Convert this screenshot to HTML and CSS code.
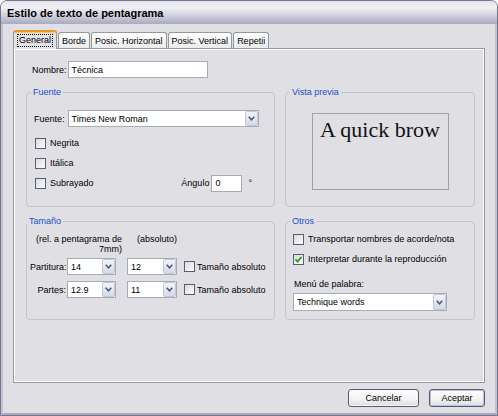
FILE: index.html
```html
<!DOCTYPE html>
<html lang="es">
<head>
<meta charset="utf-8">
<title>Estilo de texto de pentagrama</title>
<link rel="stylesheet" href="styles.css">
</head>
<body>
<div class="window">
  <div class="titlebar"><span class="title">Estilo de texto de pentagrama</span></div>
  <div class="client">
    <div class="tabs">
      <div class="tab active"><span class="focus">General</span></div>
      <div class="tab">Borde</div>
      <div class="tab">Posic. Horizontal</div>
      <div class="tab">Posic. Vertical</div>
      <div class="tab">Repetii</div>
    </div>
    <div class="panel">
      <div class="name-row">
        <span class="lbl">Nombre:</span>
        <div class="input name-input">Técnica</div>
      </div>
      <div class="groups">
        <fieldset class="group g-font">
          <legend>Fuente</legend>
          <div class="font-row">
            <span class="lbl font-lbl">Fuente:</span>
            <div class="select font-select"><span class="val">Times New Roman</span><span class="arrow"><svg width="7" height="5" viewBox="0 0 7 5"><polyline points="0.7,0.8 3.5,3.8 6.3,0.8" fill="none" stroke="#4a5a7e" stroke-width="1.6"/></svg></span></div>
          </div>
          <div class="checks">
            <div class="check-row"><span class="box"></span><span>Negrita</span></div>
            <div class="check-row"><span class="box"></span><span>Itálica</span></div>
            <div class="check-row"><span class="box"></span><span>Subrayado</span>
              <div class="angle"><span class="lbl">Ángulo</span><div class="input angle-input">0</div><span class="deg">°</span></div>
            </div>
          </div>
        </fieldset>
        <fieldset class="group g-preview">
          <legend>Vista previa</legend>
          <div class="preview"><span class="preview-text">A quick brow</span></div>
        </fieldset>
        <fieldset class="group g-size">
          <legend>Tamaño</legend>
          <div class="size-head">
            <span class="rel">(rel. a pentagrama de 7mm)</span>
            <span class="abs">(absoluto)</span>
          </div>
          <div class="size-row first">
            <span class="lbl size-lbl">Partitura:</span>
            <div class="select s1"><span class="val">14</span><span class="arrow"><svg width="7" height="5" viewBox="0 0 7 5"><polyline points="0.7,0.8 3.5,3.8 6.3,0.8" fill="none" stroke="#4a5a7e" stroke-width="1.6"/></svg></span></div>
            <div class="select s2"><span class="val">12</span><span class="arrow"><svg width="7" height="5" viewBox="0 0 7 5"><polyline points="0.7,0.8 3.5,3.8 6.3,0.8" fill="none" stroke="#4a5a7e" stroke-width="1.6"/></svg></span></div>
            <span class="box"></span><span class="cb-text">Tamaño absoluto</span>
          </div>
          <div class="size-row">
            <span class="lbl size-lbl">Partes:</span>
            <div class="select s1"><span class="val">12.9</span><span class="arrow"><svg width="7" height="5" viewBox="0 0 7 5"><polyline points="0.7,0.8 3.5,3.8 6.3,0.8" fill="none" stroke="#4a5a7e" stroke-width="1.6"/></svg></span></div>
            <div class="select s2"><span class="val">11</span><span class="arrow"><svg width="7" height="5" viewBox="0 0 7 5"><polyline points="0.7,0.8 3.5,3.8 6.3,0.8" fill="none" stroke="#4a5a7e" stroke-width="1.6"/></svg></span></div>
            <span class="box"></span><span class="cb-text">Tamaño absoluto</span>
          </div>
        </fieldset>
        <fieldset class="group g-other">
          <legend>Otros</legend>
          <div class="check-row"><span class="box"></span><span>Transportar nombres de acorde/nota</span></div>
          <div class="check-row"><span class="box checked"><svg width="9" height="9" viewBox="0 0 9 9"><path d="M1.5 4.3 L3.6 6.6 L7.6 1.8" fill="none" stroke="#22a322" stroke-width="1.8"/></svg></span><span>Interpretar durante la reproducción</span></div>
          <div class="menu-lbl">Menú de palabra:</div>
          <div class="select word-select"><span class="val">Technique words</span><span class="arrow"><svg width="7" height="5" viewBox="0 0 7 5"><polyline points="0.7,0.8 3.5,3.8 6.3,0.8" fill="none" stroke="#4a5a7e" stroke-width="1.6"/></svg></span></div>
        </fieldset>
      </div>
    </div>
    <div class="footer">
      <div class="btn cancel">Cancelar</div>
      <div class="btn ok">Aceptar</div>
    </div>
  </div>
</div>
</body>
</html>
```

FILE: styles.css
```css
* { box-sizing: border-box; }
html, body { margin: 0; padding: 0; }
body {
  width: 498px;
  height: 416px;
  overflow: hidden;
  background: #ffffff;
  font-family: "Liberation Sans", Arial, sans-serif;
  font-size: 9px;
  color: #000;
}
.window {
  width: 498px;
  height: 416px;
  display: flex;
  flex-direction: column;
  border: 1px solid #75758b;
  border-radius: 7px 7px 0 0;
  overflow: hidden;
  background: #e0dfe3;
}
.titlebar {
  height: 23px;
  flex: none;
  display: flex;
  align-items: center;
  padding-left: 6px;
  padding-top: 1px;
  background: linear-gradient(to bottom, #e4e4ec 0%, #efeff4 28%, #dcdce6 52%, #bdbdd0 82%, #a9a9c0 100%);
}
.title { font-weight: bold; font-size: 11px; color: #000; }
.client {
  flex: 1;
  display: flex;
  flex-direction: column;
  border: 2px solid #c2c2d3;
  border-top: 0;
  border-bottom-color: #a9a9bc;
  padding: 6px 10px 0 10px;
}
.tabs {
  display: flex;
  align-items: flex-end;
  gap: 1px;
  height: 19px;
  margin-bottom: -1px;
  position: relative;
  z-index: 1;
}
.tab {
  height: 16px;
  margin-bottom: 1px;
  padding: 0 3px;
  border: 1px solid #919b9c;
  border-bottom: 0;
  border-radius: 3px 3px 0 0;
  background: linear-gradient(to bottom, #ffffff, #ebebee);
  display: flex;
  align-items: center;
  white-space: nowrap;
}
.tab.active {
  height: 19px;
  margin-bottom: 0;
  padding: 0 4px;
  border-top: 2px solid #e8952f;
  box-shadow: inset 0 1px 0 #ffc85a;
  background: #e3e2e6;
}
.focus { outline: 1px dotted #000; padding: 0 1px; line-height: 11px; }
.panel {
  height: 335px;
  flex: none;
  border: 1px solid #919b9c;
  box-shadow: inset 0 0 0 1px #ffffff;
  background: #e0dfe3;
  padding: 12px 10px 0 12px;
  display: flex;
  flex-direction: column;
}
.name-row {
  display: flex;
  align-items: center;
  margin-left: 6px;
  height: 17px;
}
.lbl { white-space: nowrap; }
.input {
  height: 17px;
  border: 1px solid #a5acb5;
  background: #fff;
  padding-left: 3px;
  display: flex;
  align-items: center;
}
.name-input { width: 140px; margin-left: 1px; }
.groups {
  margin-top: 9px;
  display: grid;
  grid-template-columns: 249px 190px;
  grid-template-rows: 120px 104px;
  column-gap: 10px;
  row-gap: 9px;
}
.group {
  margin: 0;
  min-width: 0;
  border: 1px solid #c4c4ca;
  border-radius: 4px;
  padding: 12px 7px 0 7px;
}
legend {
  color: #1a4fc8;
  padding: 0 2px;
  margin-left: -3px;
  line-height: 11px;
  font-size: 9px;
}
.font-row { display: flex; align-items: center; height: 17px; }
.font-lbl { margin-right: 3px; }
.select {
  height: 17px;
  border: 1px solid #a5acb5;
  background: #fff;
  display: flex;
  align-items: stretch;
}
.select .val { flex: 1; padding-left: 3px; display: flex; align-items: center; white-space: nowrap; overflow: hidden; }
.select .arrow {
  width: 13px;
  flex: none;
  border: 1px solid #c3c8d6;
  border-radius: 2px;
  background: linear-gradient(to bottom, #f4f5f9, #d5d9e6);
  display: flex;
  align-items: center;
  justify-content: center;
}
.font-select { width: 191px; }
.checks { margin-top: 6px; display: flex; flex-direction: column; }
.check-row { display: flex; align-items: center; height: 20px; }
.box {
  width: 11px;
  height: 11px;
  flex: none;
  border: 1px solid #56606f;
  background: linear-gradient(135deg, #dcdce0, #fbfbfb);
  margin-right: 4px;
  display: flex;
  align-items: center;
  justify-content: center;
}
.checks .box { margin-left: 1px; }
.angle { margin-left: auto; margin-right: 15px; display: flex; align-items: center; }
.angle-input { width: 31px; margin-left: 2px; }
.deg { margin-left: 6px; }
.g-preview { padding-top: 15px; }
.preview {
  width: 137px;
  height: 77px;
  margin: 0 auto;
  border: 1px solid #a0a0a6;
  text-align: center;
  padding-top: 3px;
}
.preview-text {
  font-family: "Liberation Serif", "Times New Roman", serif;
  font-size: 22px;
  line-height: 1.15;
  white-space: nowrap;
  color: #111;
}
.g-size { padding: 7px 3px 0 3px; }
.size-head { display: flex; align-items: flex-start; margin-left: 4px; line-height: 10px; }
.rel { width: 88px; text-align: right; }
.abs { margin-left: 15px; }
.size-row { display: flex; align-items: center; height: 17px; margin-top: 6px; }
.size-row.first { margin-top: 4px; }
.size-lbl { width: 36px; text-align: right; margin-right: 1px; }
.s1 { width: 49px; margin-right: 11px; }
.s2 { width: 50px; margin-right: 7px; }
.size-row .box { margin-right: 2px; }
.g-other { padding: 2px 7px 0 7px; }
.menu-lbl { margin-top: 10px; margin-left: 1px; line-height: 11px; }
.word-select { width: 154px; height: 18px; margin-top: 3px; }
.footer {
  display: flex;
  justify-content: flex-end;
  gap: 10px;
  margin-top: 6px;
}
.btn {
  height: 18px;
  border: 1px solid #5b5b70;
  border-radius: 3px;
  background: linear-gradient(to bottom, #ffffff 0%, #f2f2f2 60%, #dcdce0 100%);
  box-shadow: inset 0 0 0 1px #f6f6f8;
  display: flex;
  align-items: center;
  justify-content: center;
}
.cancel { width: 71px; }
.ok { width: 56px; box-shadow: inset 0 0 0 1px #b6c2e2; }
```
